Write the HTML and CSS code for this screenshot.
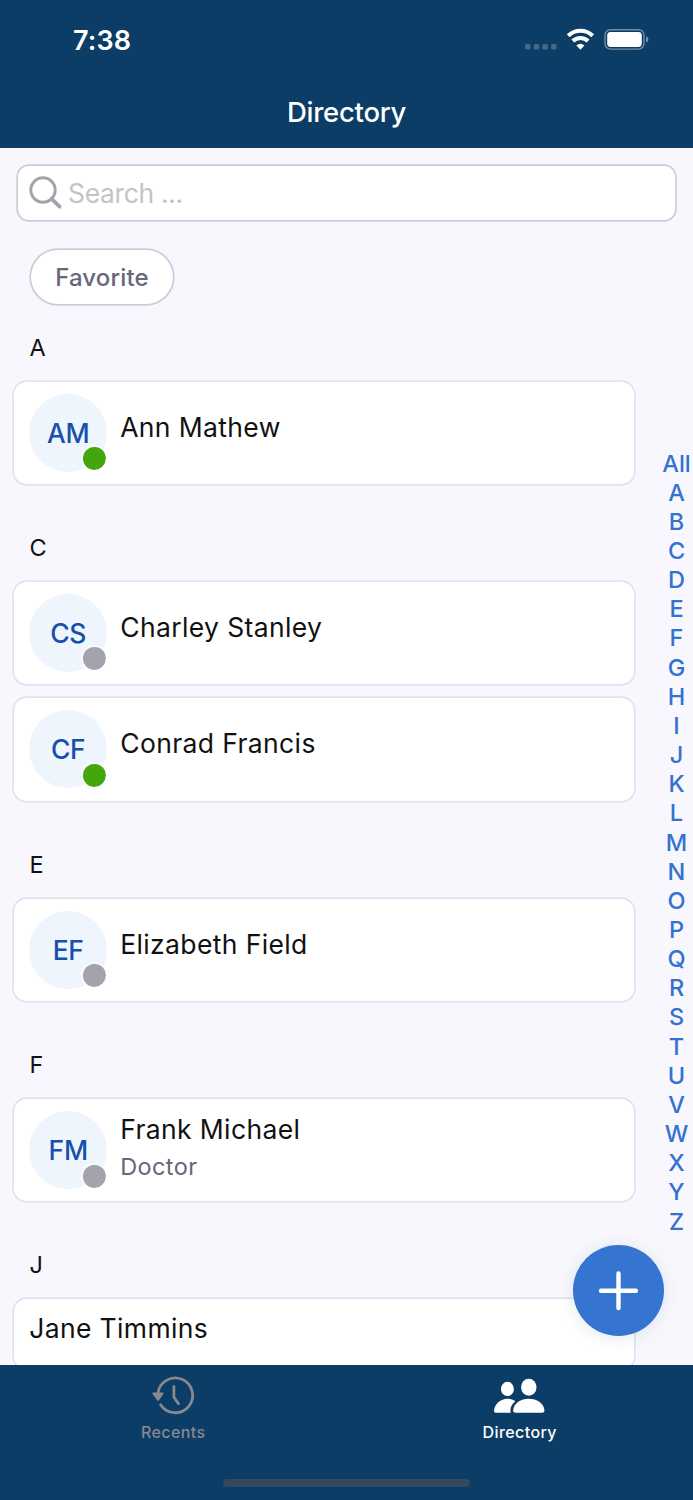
FILE: index.html
```html
<!DOCTYPE html>
<html lang="en">
<head>
<meta charset="utf-8">
<title>Directory</title>
<link rel="stylesheet" href="styles.css">
</head>
<body>
<div class="app">
  <header class="header">
    <div class="status">
      <span class="time">7:38</span>
      <svg class="status-icons" width="126" height="24" viewBox="0 0 126 24">
        <g fill="#fff" fill-opacity=".23">
          <rect x="0" y="16" width="5.6" height="5.4" rx="1.7"/>
          <rect x="8.7" y="16" width="5.6" height="5.4" rx="1.7"/>
          <rect x="17.3" y="16" width="5.6" height="5.4" rx="1.7"/>
          <rect x="26" y="16" width="5.6" height="5.4" rx="1.7"/>
        </g>
        <g fill="none" stroke="#fff" stroke-width="4">
          <path d="M43.2 7.800a17.500 17.500 0 0 1 24.500 0"/>
          <path d="M47.800 13a11 11 0 0 1 15.300 0"/>
        </g>
        <path d="M51.4 17.400a5.900 5.900 0 0 1 8 0l-4 4.300z" fill="#fff"/>
        <rect x="80" y="1.700" width="39" height="19.400" rx="5.400" fill="none" stroke="#fff" stroke-opacity=".42" stroke-width="1.400"/>
        <rect x="82.200" y="3.900" width="34.600" height="15" rx="3.400" fill="#fff"/>
        <path d="M121.200 8.200c2.800 1.400 2.800 5 0 6.400z" fill="#fff" fill-opacity=".5"/>
      </svg>
    </div>
    <h1 class="title">Directory</h1>
  </header>

  <main class="content">
    <div class="search">
      <svg width="34" height="36" viewBox="0 0 34 36" fill="none" stroke="#a4a3ac">
        <circle cx="14" cy="15" r="12.200" stroke-width="2.900"/>
        <path d="M22.600 23.800l8 7.900" stroke-width="3.800" stroke-linecap="round"/>
      </svg>
      <span class="placeholder">Search ...</span>
    </div>
    <button class="chip">Favorite</button>

    <section class="group">
      <h2 class="letter">A</h2>
      <article class="card">
        <div class="avatar">AM<i class="dot online"></i></div>
        <div class="info"><span class="name">Ann Mathew</span></div>
      </article>
    </section>
    <section class="group">
      <h2 class="letter">C</h2>
      <article class="card">
        <div class="avatar">CS<i class="dot"></i></div>
        <div class="info"><span class="name">Charley Stanley</span></div>
      </article>
      <article class="card">
        <div class="avatar">CF<i class="dot online"></i></div>
        <div class="info"><span class="name">Conrad Francis</span></div>
      </article>
    </section>
    <section class="group">
      <h2 class="letter">E</h2>
      <article class="card">
        <div class="avatar">EF<i class="dot"></i></div>
        <div class="info"><span class="name">Elizabeth Field</span></div>
      </article>
    </section>
    <section class="group">
      <h2 class="letter">F</h2>
      <article class="card">
        <div class="avatar">FM<i class="dot"></i></div>
        <div class="info two-line"><span class="name">Frank Michael</span><span class="role">Doctor</span></div>
      </article>
    </section>
    <section class="group">
      <h2 class="letter">J</h2>
      <article class="card plain"><span class="name">Jane Timmins</span></article>
    </section>

    <nav class="index">
      <span>All</span><span>A</span><span>B</span><span>C</span><span>D</span><span>E</span><span>F</span><span>G</span><span>H</span><span>I</span><span>J</span><span>K</span><span>L</span><span>M</span><span>N</span><span>O</span><span>P</span><span>Q</span><span>R</span><span>S</span><span>T</span><span>U</span><span>V</span><span>W</span><span>X</span><span>Y</span><span>Z</span>
    </nav>
    <button class="fab" aria-label="Add">
      <svg width="40" height="40" viewBox="0 0 40 40" stroke="#fff" stroke-width="4.400" stroke-linecap="round"><path d="M19.500 2.500v34.600M2.100 19.800h34.800"/></svg>
    </button>
  </main>

  <footer class="tabs">
    <a class="tab">
      <svg width="44" height="40" viewBox="0 0 44 40" fill="none" stroke="#868a90" stroke-width="2.800" stroke-linecap="round" stroke-linejoin="round">
        <path d="M6.900 18.500a17.400 17.400 0 1 1 2.700 11.300"/>
        <path d="M22.900 11.600v10.600l4.600 6.400"/>
        <path d="M2.300 18.500h9.400l-4.700 6.600z" fill="#868a90" stroke-width="1.800"/>
      </svg>
      <span>Recents</span>
    </a>
    <a class="tab active">
      <svg width="52" height="40" viewBox="0 0 52 40" fill="#fff">
        <g transform="translate(-.9 .3)">
          <ellipse cx="14.300" cy="13.600" rx="6.500" ry="7.100"/>
          <ellipse cx="35.700" cy="12" rx="7.700" ry="8.500"/>
          <path d="M3 37.400c-1.600 0-2.200-1-2-2.600.8-6.400 6.500-11.400 13.300-11.400 3.200 0 5.800.9 8 2.500-3.200 2.700-5 5.600-5 9.200 0 .9.100 1.600.4 2.300z"/>
          <path d="M22.600 37.400c-2 0-2.700-1.100-2.500-2.800.8-6.700 7.500-11.200 15.600-11.200s14.700 4.500 15.600 11.200c.2 1.700-.5 2.800-2.500 2.800z"/>
        </g>
      </svg>
      <span>Directory</span>
    </a>
    <div class="home-bar"></div>
  </footer>
</div>
</body>
</html>
```
FILE: styles.css
```css
* { box-sizing: border-box; }
body { margin: 0; font-family: Inter, "Liberation Sans", sans-serif; }
.app {
  width: 693px;
  height: 1500px;
  display: flex;
  flex-direction: column;
  overflow: hidden;
  background: #f8f7fd;
}
.header {
  height: 147.5px;
  flex: none;
  background: #0c3d66;
  color: #fff;
}
.status {
  height: 80px;
  padding: 0 42px 0 73px;
  display: flex;
  align-items: center;
  justify-content: space-between;
}
.time { font-size: 27px; font-weight: 580; letter-spacing: 0.1px; }
.title {
  margin: 15px 0 0;
  text-align: center;
  font-size: 27.5px;
  line-height: 35px;
  font-weight: 550;
  letter-spacing: -0.25px;
}
.content {
  flex: 1;
  min-height: 0;
  position: relative;
  overflow: hidden;
  padding: 18px 0 0;
}
.search {
  height: 54.5px;
  margin: 0 18px;
  border-radius: 11px;
  background: #fff;
  box-shadow: 0 0 0 1.7px #cccbd8;
  display: flex;
  align-items: center;
  padding-left: 11px;
  gap: 5px;
}
.placeholder { font-size: 26.5px; color: #c4c4c6; letter-spacing: -0.35px; padding-top: 1px; }
.chip {
  display: block;
  width: 142px;
  height: 54.5px;
  margin: 29.5px 0 0 31px;
  padding: 0;
  border: 0;
  border-radius: 28px;
  background: #fff;
  box-shadow: 0 0 0 1.7px #cccbd8;
  font: 480 24px/55px Inter, sans-serif;
  letter-spacing: 0.15px;
  color: #68667a;
}
.group { margin-bottom: 48.1px; }
.chip + .group { margin-top: 27.5px; }
.letter {
  margin: 0 0 18px 29.5px;
  font-size: 23.5px;
  line-height: 32px;
  font-weight: 400;
  color: #111;
}
.card {
  width: 620px;
  height: 102.2px;
  margin-left: 14px;
  padding: 0 15.2px;
  border-radius: 13px;
  background: #fff;
  box-shadow: 0 0 0 1.7px #e0e3ee;
  display: flex;
  align-items: center;
  gap: 13px;
}
.card + .card { margin-top: 14.4px; }
.avatar {
  position: relative;
  width: 78px;
  height: 78px;
  flex: none;
  border-radius: 50%;
  background: #eef5fc;
  color: #1750ab;
  font-size: 26.5px;
  font-weight: 460;
  line-height: 79px;
  text-align: center;
  letter-spacing: -0.3px;
}
.dot {
  position: absolute;
  right: 0;
  bottom: 0.5px;
  width: 26px;
  height: 26px;
  border: 1px solid #fff;
  border-radius: 50%;
  background-color: #a4a3ac;
  background-clip: content-box;
  padding: 0.5px;
}
.dot.online { background-color: #43a60d; }
.info { display: flex; flex-direction: column; padding-bottom: 12px; }
.name { font-size: 26.5px; line-height: 34px; color: #111; letter-spacing: 0.37px; }
.two-line { padding-bottom: 5px; }
.role { font-size: 23.5px; line-height: 32px; margin-top: 5px; color: #68667a; letter-spacing: 0.4px; }
.plain { align-items: flex-start; height: 70px; padding-top: 12px; }
.index {
  position: absolute;
  top: 301px;
  right: 0;
  width: 33px;
  display: flex;
  flex-direction: column;
  align-items: center;
  font-size: 23.5px;
  font-weight: 460;
  line-height: 29.16px;
  color: #3472d2;
}
.fab {
  position: absolute;
  left: 573px;
  top: 1097.5px;
  width: 91px;
  height: 91px;
  padding: 0;
  border: 0;
  border-radius: 50%;
  background: #3574d1;
  box-shadow: 0 2px 16px rgba(40, 80, 120, 0.13);
  display: flex;
  align-items: center;
  justify-content: center;
}
.tabs {
  position: relative;
  height: 135px;
  flex: none;
  display: flex;
  background: #0c3d66;
}
.tab {
  flex: 1;
  padding-top: 10px;
  display: flex;
  flex-direction: column;
  align-items: center;
  font-size: 16px;
  line-height: 20px;
  font-weight: 490;
  letter-spacing: 0.4px;
  color: #868a90;
}
.tab span { margin-top: 7px; }
.tab.active { color: #fff; }
.home-bar {
  position: absolute;
  left: 223px;
  bottom: 13px;
  width: 247px;
  height: 8px;
  border-radius: 4px;
  background: #34495b;
}
```
